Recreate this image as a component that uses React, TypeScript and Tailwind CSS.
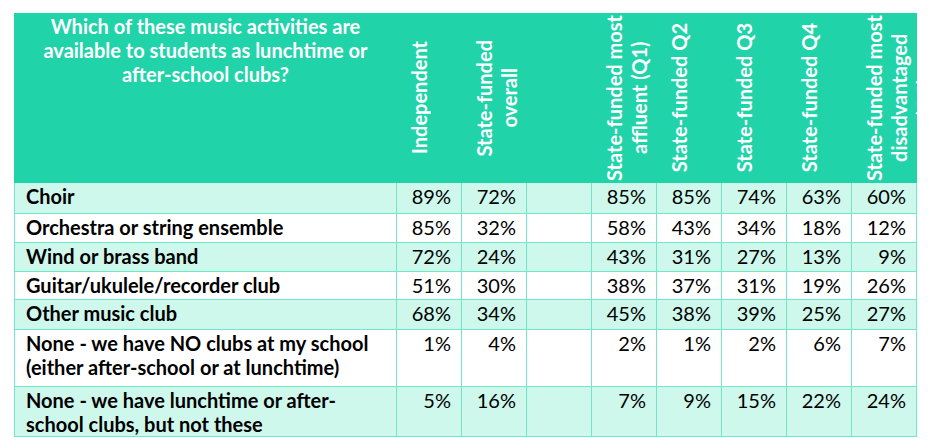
import React from "react";

const rows: { label: string[]; vals: (string | null)[]; h: string; bg: string }[] = [
  { label: ["Choir"], vals: ["89%", "72%", null, "85%", "85%", "74%", "63%", "60%"], h: "h-[31px]", bg: "bg-[#cef8ec]" },
  { label: ["Orchestra or string ensemble"], vals: ["85%", "32%", null, "58%", "43%", "34%", "18%", "12%"], h: "h-[29px]", bg: "bg-white" },
  { label: ["Wind or brass band"], vals: ["72%", "24%", null, "43%", "31%", "27%", "13%", "9%"], h: "h-[29px]", bg: "bg-[#cef8ec]" },
  { label: ["Guitar/ukulele/recorder club"], vals: ["51%", "30%", null, "38%", "37%", "31%", "19%", "26%"], h: "h-[28px]", bg: "bg-white" },
  { label: ["Other music club"], vals: ["68%", "34%", null, "45%", "38%", "39%", "25%", "27%"], h: "h-[30px]", bg: "bg-[#cef8ec]" },
  { label: ["None - we have NO clubs at my school", "(either after-school or at lunchtime)"], vals: ["1%", "4%", null, "2%", "1%", "2%", "6%", "7%"], h: "h-[57px]", bg: "bg-white" },
  { label: ["None - we have lunchtime or after-", "school clubs, but not these"], vals: ["5%", "16%", null, "7%", "9%", "15%", "22%", "24%"], h: "h-[49px]", bg: "bg-[#cef8ec]" },
];

const heads: string[][] = [
  ["Independent"],
  ["State-funded", "overall"],
  [],
  ["State-funded most", "affluent (Q1)"],
  ["State-funded Q2"],
  ["State-funded Q3"],
  ["State-funded Q4"],
  ["State-funded most", "disadvantaged", "(Q5)"],
];

export default function App() {
  return (
    <div
      className="w-[930px] h-[448px] bg-white pl-[14px] pt-[13px]"
      style={{ fontFamily: "Lato, 'Open Sans', sans-serif" }}
    >
      <div className="w-[903px]">
        <div className="grid grid-cols-[383px_repeat(8,65px)] h-[170px] bg-[#21d3a9] text-white font-bold">
          <div className="text-center text-[20px] leading-[24px] pt-[1px]">
            Which of these music activities are
            <br />
            available to students as lunchtime or
            <br />
            after-school clubs?
          </div>
          {heads.map((h, i) => (
            <div key={i} className="flex items-center justify-start pl-[10px] overflow-hidden">
              {h.length > 0 && (
                <div className="[writing-mode:vertical-rl] rotate-180 text-center text-[20px] leading-[25px] whitespace-nowrap">
                  {h.map((l, j) => (
                    <React.Fragment key={j}>
                      {j > 0 && <br />}
                      {l}
                    </React.Fragment>
                  ))}
                </div>
              )}
            </div>
          ))}
        </div>
        {rows.map((r, i) => (
          <div key={i} className={`grid grid-cols-[383px_repeat(8,65px)] ${r.h} ${r.bg} text-black text-[20px] leading-[24px]`}>
            <div className="border-l border-r border-b border-[#6ee8c9] pl-[11px] font-bold pt-[1px]">
              {r.label.map((l, j) => (
                <div key={j}>{l}</div>
              ))}
            </div>
            {r.vals.map((v, j) => (
              <div key={j} className="border-r border-b border-[#6ee8c9] text-right pr-[10px] pt-[1px]">
                {v}
              </div>
            ))}
          </div>
        ))}
      </div>
    </div>
  );
}
